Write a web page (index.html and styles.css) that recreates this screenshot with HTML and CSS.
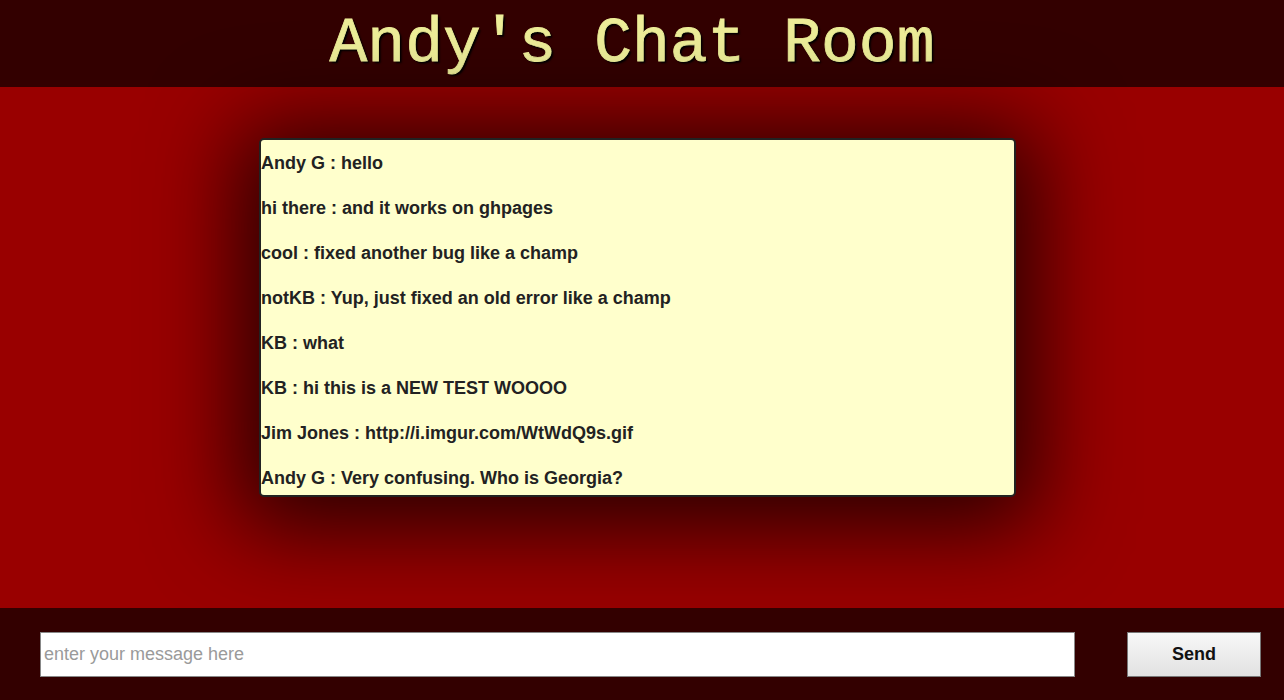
FILE: index.html
```html
<!DOCTYPE html>
<html>
<head>
<meta charset="utf-8">
<title>Andy's Chat Room</title>
<link rel="stylesheet" href="styles.css">
</head>
<body>
<header class="top">
  <h1 class="title">Andy's Chat Room</h1>
</header>
<main class="stage">
  <div class="chat">
    <p class="msg">Andy G : hello</p>
    <p class="msg">hi there : and it works on ghpages</p>
    <p class="msg">cool : fixed another bug like a champ</p>
    <p class="msg">notKB : Yup, just fixed an old error like a champ</p>
    <p class="msg">KB : what</p>
    <p class="msg">KB : hi this is a NEW TEST WOOOO</p>
    <p class="msg">Jim Jones : http://i.imgur.com/WtWdQ9s.gif</p>
    <p class="msg">Andy G : Very confusing. Who is Georgia?</p>
  </div>
</main>
<footer class="bottom">
  <input class="entry" type="text" placeholder="enter your message here">
  <button class="send">Send</button>
</footer>
</body>
</html>
```
FILE: styles.css
```css
html, body {
  margin: 0;
  padding: 0;
  height: 100%;
}
body {
  display: flex;
  flex-direction: column;
  background: #990000;
  font-family: "Liberation Sans", Arial, sans-serif;
  overflow: hidden;
}
.top {
  height: 87px;
  background: #330000;
  display: flex;
  justify-content: center;
  align-items: flex-start;
  padding-right: 20px;
  flex: none;
}
.title {
  margin: 10px 0 0 0;
  font-family: "Courier New", Courier, "Nimbus Mono PS", FreeMono, "Liberation Mono", monospace;
  font-weight: normal;
  font-size: 63px;
  line-height: 70px;
  color: #eeee99;
  text-shadow: 2px 2px 2px #000;
  -webkit-text-stroke: 0.8px #eeee99;
}
.stage {
  flex: 1;
  background: #990000;
  padding-top: 51px;
  padding-left: 259px;
}
.chat {
  width: 753px;
  height: 337px;
  box-sizing: content-box;
  background: #ffffcc;
  border: 2px solid #222;
  border-radius: 5px;
  padding: 13px 0 5px 0;
  overflow: hidden;
  display: flex;
  flex-direction: column;
  gap: 25px;
  box-shadow: 0 10px 90px 20px rgba(0, 0, 0, 0.75);
}
.msg {
  margin: 0;
  font-size: 18px;
  line-height: 20px;
  font-weight: bold;
  color: #222;
  white-space: nowrap;
}
.bottom {
  flex: none;
  height: 92px;
  box-sizing: border-box;
  background: #330000;
  display: flex;
  align-items: flex-start;
  padding: 24px 23px 0 40px;
  gap: 52px;
}
.entry {
  flex: 1;
  height: 45px;
  box-sizing: border-box;
  border: 1px solid #888;
  background: #fff;
  padding: 0 3px;
  font-family: "Liberation Sans", Arial, sans-serif;
  font-size: 18px;
  color: #222;
  outline: none;
  margin: 0;
}
.entry::placeholder {
  color: #9a9a9a;
}
.send {
  width: 134px;
  height: 45px;
  box-sizing: border-box;
  border: 1px solid #777;
  background: linear-gradient(#f7f7f7, #e2e2e2);
  font-family: "Liberation Sans", Arial, sans-serif;
  font-weight: bold;
  font-size: 18px;
  color: #111;
  margin: 0;
  padding: 0;
}
```
